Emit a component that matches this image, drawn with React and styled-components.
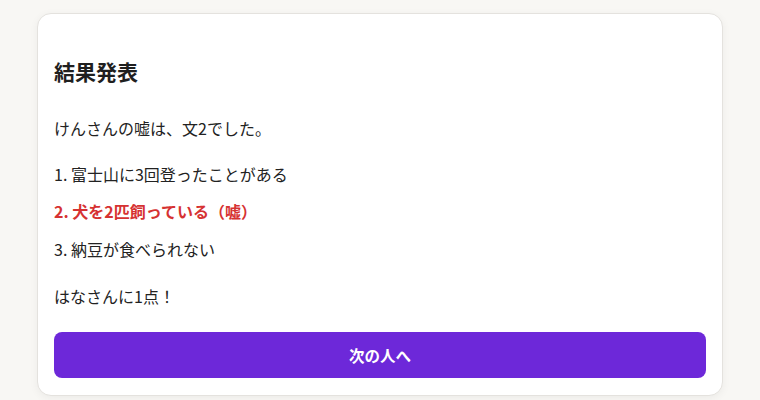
import styled, { createGlobalStyle } from "styled-components";

const GlobalStyle = createGlobalStyle`
  * {
    box-sizing: border-box;
  }
  body {
    margin: 0;
    background: #f8f7f4;
    font-family: "Noto Sans CJK JP", "Noto Sans", sans-serif;
    color: #222;
  }
`;

const statements = [
  { id: 1, text: "富士山に3回登ったことがある" },
  { id: 2, text: "犬を2匹飼っている", lie: true },
  { id: 3, text: "納豆が食べられない" },
];

export default function App() {
  return (
    <>
      <GlobalStyle />
      <Page>
        <Card>
          <Title>結果発表</Title>
          <Message>けんさんの嘘は、文2でした。</Message>
          <List>
            {statements.map((s) => (
              <Item key={s.id} $lie={s.lie}>
                {s.id}. {s.text}
                {s.lie && "（嘘）"}
              </Item>
            ))}
          </List>
          <Score>はなさんに1点！</Score>
          <NextButton>次の人へ</NextButton>
        </Card>
      </Page>
    </>
  );
}

const Page = styled.main`
  width: 100%;
  min-height: 400px;
  padding-top: 13px;
  display: flex;
  justify-content: center;
  align-items: flex-start;
`;

const Card = styled.section`
  width: 686px;
  background: #fff;
  border: 1px solid #e4e2de;
  border-radius: 14px;
  box-shadow: 0 2px 8px rgba(0, 0, 0, 0.05);
  padding: 43px 16px 17px 16px;
  display: flex;
  flex-direction: column;
`;

const Title = styled.h2`
  margin: 0;
  font-size: 21px;
  font-weight: 700;
  line-height: 29px;
  color: #1f1f1f;
`;

const Message = styled.p`
  margin: 30px 0 0 0;
  font-size: 16px;
  line-height: 25.6px;
`;

const List = styled.ol`
  list-style: none;
  margin: 20px 0 0 0;
  padding: 0;
  display: flex;
  flex-direction: column;
  gap: 12px;
`;

const Item = styled.li`
  font-size: 16px;
  line-height: 25.6px;
  color: ${(props) => (props.$lie ? "#d63232" : "#222")};
  font-weight: ${(props) => (props.$lie ? 700 : 400)};
`;

const Score = styled.p`
  margin: 22px 0 0 0;
  font-size: 16px;
  line-height: 25.6px;
`;

const NextButton = styled.button`
  margin-top: 22px;
  width: 100%;
  height: 46px;
  border: none;
  border-radius: 8px;
  background: #6d28d9;
  color: #fff;
  font-family: "Noto Sans CJK JP", "Noto Sans", sans-serif;
  font-size: 15.5px;
  font-weight: 700;
  cursor: pointer;
`;
